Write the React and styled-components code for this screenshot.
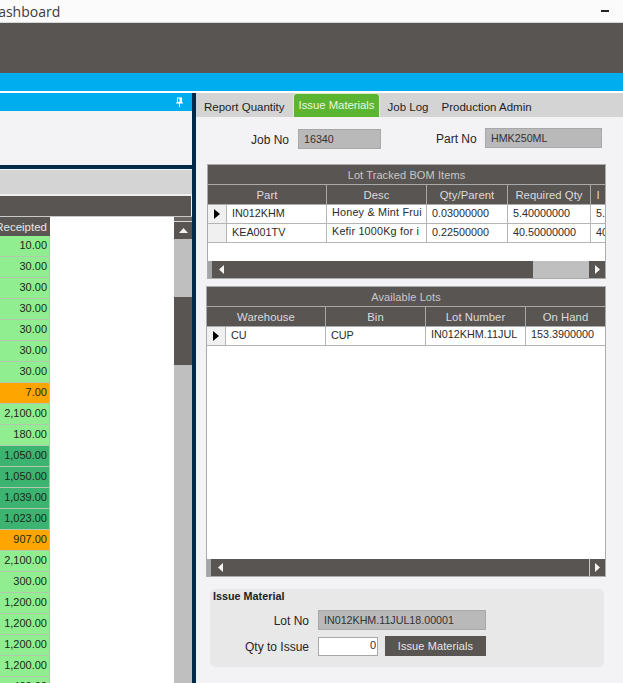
import React from "react";
import styled, { createGlobalStyle } from "styled-components";

const GlobalStyle = createGlobalStyle`
  html, body {
    margin: 0;
    padding: 0;
    background: #f3f3f5;
    overflow: hidden;
  }
  * { box-sizing: border-box; }
`;

const receipts = [
  ["10.00", "light"], ["30.00", "light"], ["30.00", "light"], ["30.00", "light"],
  ["30.00", "light"], ["30.00", "light"], ["30.00", "light"], ["7.00", "orange"],
  ["2,100.00", "light"], ["180.00", "light"], ["1,050.00", "dark"], ["1,050.00", "dark"],
  ["1,039.00", "dark"], ["1,023.00", "dark"], ["907.00", "orange"], ["2,100.00", "light"],
  ["300.00", "light"], ["1,200.00", "light"], ["1,200.00", "light"], ["1,200.00", "light"],
  ["1,200.00", "light"], ["400.00", "light"],
];

const bomColumns = "19px 100px 100px 81px 83px 1fr";
const lotColumns = "19px 100px 100px 100px 1fr";

function Arrow({ dir }) {
  const points = {
    up: "0,5 4.5,0 9,5",
    left: "5,0 0,4.5 5,9",
    right: "0,0 5,4.5 0,9",
  }[dir];
  const box = dir === "up" ? "0 0 9 5" : "0 0 5 9";
  return (
    <svg width={dir === "up" ? 9 : 5} height={dir === "up" ? 5 : 9} viewBox={box}>
      <polygon points={points} fill="#f4f4f4" />
    </svg>
  );
}

function RowMarker() {
  return (
    <svg width="6" height="10" viewBox="0 0 6 10">
      <polygon points="0,0 6,5 0,10" fill="#000" />
    </svg>
  );
}

function PinIcon() {
  return (
    <svg width="7" height="10" viewBox="0 0 7 10">
      <path d="M1 0.5h5v5h-5z M0 5.5h7v1h-7z M3 6.5h1v3.5h-1z" fill="#fff" />
      <rect x="2" y="1.5" width="1.5" height="3.5" fill="#00aeef" />
    </svg>
  );
}

function App() {
  return (
    <Page>
      <GlobalStyle />
      <TitleBar>
        <TitleText>Dashboard</TitleText>
        <MinimizeMark />
      </TitleBar>
      <Ribbon />
      <BlueStrip />
      <Workspace>
        <LeftPanel>
          <PanelHeader>
            <PinIcon />
          </PanelHeader>
          <PanelBody />
          <GroupBand />
          <GridCaption />
          <ReceiptArea>
            <ReceiptColumn>
              <ReceiptHead>Receipted</ReceiptHead>
              {receipts.map(([value, tone], index) => (
                <ReceiptCell key={index} $tone={tone}>{value}</ReceiptCell>
              ))}
            </ReceiptColumn>
            <EmptySpace />
            <VerticalScroll>
              <ScrollCap />
              <ScrollUp><Arrow dir="up" /></ScrollUp>
              <VerticalThumb />
            </VerticalScroll>
          </ReceiptArea>
        </LeftPanel>

        <RightPanel>
          <TabStrip>
            <Tab>Report Quantity</Tab>
            <ActiveTab>Issue Materials</ActiveTab>
            <Tab $gap={8}>Job Log</Tab>
            <Tab $gap={13}>Production Admin</Tab>
          </TabStrip>
          <JobRow>
            <FieldLabel $width={39}>Job No</FieldLabel>
            <ReadOnlyField $width={83}>16340</ReadOnlyField>
            <FieldLabel $width={41} $gap={55} $lift>Part No</FieldLabel>
            <ReadOnlyField $width={117} $lift>HMK250ML</ReadOnlyField>
          </JobRow>

          <BomGrid>
            <GridTitle>Lot Tracked BOM Items</GridTitle>
            <GridHeadRow $columns={bomColumns}>
              <HeadCell $span={2}>Part</HeadCell>
              <HeadCell>Desc</HeadCell>
              <HeadCell>Qty/Parent</HeadCell>
              <HeadCell>Required Qty</HeadCell>
              <HeadCell>I</HeadCell>
            </GridHeadRow>
            <DataRow $columns={bomColumns}>
              <MarkerCell><RowMarker /></MarkerCell>
              <DataCell>IN012KHM</DataCell>
              <DataCell $lift $wide>Honey &amp; Mint Frui</DataCell>
              <DataCell>0.03000000</DataCell>
              <DataCell>5.40000000</DataCell>
              <DataCell $last>5.4</DataCell>
            </DataRow>
            <DataRow $columns={bomColumns}>
              <MarkerCell />
              <DataCell>KEA001TV</DataCell>
              <DataCell $lift $wide>Kefir 1000Kg for i</DataCell>
              <DataCell>0.22500000</DataCell>
              <DataCell>40.50000000</DataCell>
              <DataCell $last>40</DataCell>
            </DataRow>
            <GridFill />
            <HorizontalScroll>
              <ScrollSliver />
              <ScrollButton><Arrow dir="left" /></ScrollButton>
              <HorizontalThumb $width={304} />
              <ScrollTrack />
              <ScrollButton><Arrow dir="right" /></ScrollButton>
            </HorizontalScroll>
          </BomGrid>

          <LotGrid>
            <GridTitle>Available Lots</GridTitle>
            <GridHeadRow $columns={lotColumns}>
              <HeadCell $span={2}>Warehouse</HeadCell>
              <HeadCell>Bin</HeadCell>
              <HeadCell>Lot Number</HeadCell>
              <HeadCell>On Hand</HeadCell>
            </GridHeadRow>
            <DataRow $columns={lotColumns}>
              <MarkerCell><RowMarker /></MarkerCell>
              <DataCell>CU</DataCell>
              <DataCell>CUP</DataCell>
              <DataCell $lift>IN012KHM.11JUL</DataCell>
              <DataCell $lift $last>153.3900000</DataCell>
            </DataRow>
            <GridFill />
            <HorizontalScroll>
              <ScrollSliver />
              <ScrollButton><Arrow dir="left" /></ScrollButton>
              <HorizontalThumb $grow />
              <ScrollButton $divider><Arrow dir="right" /></ScrollButton>
            </HorizontalScroll>
          </LotGrid>

          <IssueBox>
            <IssueTitle>Issue Material</IssueTitle>
            <IssueRow>
              <IssueLabel>Lot No</IssueLabel>
              <ReadOnlyField $width={168}>IN012KHM.11JUL18.00001</ReadOnlyField>
            </IssueRow>
            <IssueRow $gap={6}>
              <IssueLabel>Qty to Issue</IssueLabel>
              <QtyInput>0</QtyInput>
              <IssueButton>Issue Materials</IssueButton>
            </IssueRow>
          </IssueBox>
        </RightPanel>
      </Workspace>
    </Page>
  );
}

export default App;

const Page = styled.div`
  width: 623px;
  height: 683px;
  display: flex;
  flex-direction: column;
  overflow: hidden;
  font-family: "Liberation Sans", Arial, sans-serif;
  font-size: 12px;
  color: #222;
`;

const TitleBar = styled.div`
  height: 23px;
  flex: none;
  display: flex;
  align-items: center;
  justify-content: space-between;
  background: #fbfbfb;
  border-bottom: 1px solid #d8d8d8;
  padding-right: 14px;
  overflow: hidden;
`;

const TitleText = styled.span`
  margin-left: -12px;
  font-family: "Open Sans", sans-serif;
  font-size: 14px;
  color: #3c3c3c;
`;

const MinimizeMark = styled.span`
  width: 8px;
  height: 2px;
  background: #222;
`;

const Ribbon = styled.div`
  height: 50px;
  flex: none;
  background: #595553;
`;

const BlueStrip = styled.div`
  height: 18px;
  flex: none;
  background: #00aeef;
`;

const Workspace = styled.div`
  flex: 1;
  min-height: 0;
  display: flex;
  padding-top: 2px;
  background: #fff;
`;

const LeftPanel = styled.div`
  width: 196px;
  flex: none;
  display: flex;
  flex-direction: column;
  border-right: 4px solid #012a4a;
  background: #f1f1f1;
  overflow: hidden;
`;

const PanelHeader = styled.div`
  height: 18px;
  flex: none;
  display: flex;
  align-items: center;
  justify-content: flex-end;
  padding-right: 9px;
  background: #00aeef;
`;

const PanelBody = styled.div`
  height: 54px;
  flex: none;
  background: #f3f3f5;
`;

const GroupBand = styled.div`
  height: 29px;
  flex: none;
  background: #d4d4d4;
  border-top: 4px solid #012a4a;
  box-shadow: inset 0 1px 0 #f3f3f5;
`;

const GridCaption = styled.div`
  height: 22px;
  flex: none;
  margin-right: 1px;
  background: #595553;
  border-top: 2px solid #eeeeee;
`;

const ReceiptArea = styled.div`
  flex: 1;
  min-height: 0;
  display: flex;
  border-top: 1px solid #c9c9c9;
  background: #fff;
`;

const ReceiptColumn = styled.div`
  width: 50px;
  flex: none;
  display: flex;
  flex-direction: column;
  border-right: 1px solid #a8c8a0;
`;

const ReceiptHead = styled.div`
  height: 19px;
  flex: none;
  display: flex;
  align-items: center;
  justify-content: flex-end;
  padding-right: 3px;
  margin-right: -1px;
  background: #595553;
  color: #e6e6e6;
  font-size: 11.5px;
  white-space: nowrap;
  overflow: hidden;
`;

const toneColors = { light: "#90ee90", dark: "#3cb371", orange: "#ffa500" };

const ReceiptCell = styled.div`
  height: 21px;
  flex: none;
  display: flex;
  align-items: center;
  justify-content: flex-end;
  padding: 0 2px 2px 0;
  font-size: 11px;
  white-space: nowrap;
  color: #1a2a1a;
  background: ${({ $tone }) => toneColors[$tone]};
  border-bottom: 1px solid #b4c8b0;
`;

const EmptySpace = styled.div`
  flex: 1;
  background: #fff;
`;

const VerticalScroll = styled.div`
  width: 18px;
  flex: none;
  display: flex;
  flex-direction: column;
  background: #bfbfbf;
`;

const ScrollCap = styled.div`
  height: 5px;
  flex: none;
  background: #6a6664;
  border-bottom: 1px solid #d8d8d8;
`;

const ScrollUp = styled.div`
  height: 17px;
  flex: none;
  display: flex;
  align-items: center;
  justify-content: center;
  background: #595553;
`;

const VerticalThumb = styled.div`
  height: 68px;
  flex: none;
  margin-top: 58px;
  background: #595553;
`;

const RightPanel = styled.div`
  flex: 1;
  min-width: 0;
  display: flex;
  flex-direction: column;
  background: #f3f3f5;
`;

const TabStrip = styled.div`
  height: 24px;
  flex: none;
  display: flex;
  align-items: flex-end;
  padding-left: 8px;
  background: #d4d4d4;
`;

const Tab = styled.div`
  height: 21px;
  line-height: 23px;
  margin-left: ${({ $gap }) => $gap || 0}px;
  font-size: 11.5px;
  color: #1f1f1f;
  white-space: nowrap;
`;

const ActiveTab = styled.div`
  height: 24px;
  width: 87px;
  margin-left: 8px;
  padding-left: 5px;
  line-height: 22px;
  font-size: 11.3px;
  color: #eaf6e0;
  white-space: nowrap;
  background: #5cb531;
  border: 1px solid #d8efc8;
  border-bottom: 0;
  border-radius: 4px 4px 0 0;
`;

const JobRow = styled.div`
  height: 47px;
  flex: none;
  display: flex;
  align-items: flex-start;
  padding: 12px 0 0 55px;
`;

const FieldLabel = styled.div`
  width: ${({ $width }) => $width}px;
  flex: none;
  margin-left: ${({ $gap }) => $gap || 0}px;
  margin-right: 8px;
  margin-top: ${({ $lift }) => ($lift ? -1 : 0)}px;
  line-height: 22px;
  white-space: nowrap;
  color: #2a2226;
`;

const ReadOnlyField = styled.div`
  width: ${({ $width }) => $width}px;
  height: 20px;
  flex: none;
  margin-top: ${({ $lift }) => ($lift ? -1 : 0)}px;
  padding-left: 5px;
  line-height: 18px;
  font-size: 10.7px;
  color: #333;
  background: #b9b9b9;
  border: 1px solid #a8a8a8;
  white-space: nowrap;
  overflow: hidden;
`;

const GridFrame = styled.div`
  flex: none;
  display: flex;
  flex-direction: column;
  background: #fff;
  border: 1px solid #ababab;
  overflow: hidden;
`;

const BomGrid = styled(GridFrame)`
  height: 115px;
  width: 399px;
  margin-left: 11px;
`;

const LotGrid = styled(GridFrame)`
  height: 291px;
  width: 400px;
  margin: 7px 0 0 10px;
`;

const GridTitle = styled.div`
  height: 20px;
  flex: none;
  text-align: center;
  line-height: 20px;
  font-size: 11px;
  letter-spacing: 0.1px;
  color: #c9c7c6;
  background: #595553;
  border-bottom: 1px solid #a9a9a9;
`;

const GridHeadRow = styled.div`
  height: 20px;
  flex: none;
  display: grid;
  grid-template-columns: ${({ $columns }) => $columns};
  background: #595553;
  border-bottom: 1px solid #ababab;
`;

const HeadCell = styled.div`
  grid-column: span ${({ $span }) => $span || 1};
  text-align: center;
  line-height: 20px;
  font-size: 11.3px;
  letter-spacing: 0.05px;
  color: #dcdad9;
  border-right: 1px solid #a9a9a9;
  white-space: nowrap;
  overflow: hidden;
  &:last-child { border-right: 0; }
`;

const DataRow = styled.div`
  height: 19px;
  flex: none;
  display: grid;
  grid-template-columns: ${({ $columns }) => $columns};
  border-bottom: 1px solid #b5b5b5;
`;

const MarkerCell = styled.div`
  display: flex;
  align-items: center;
  justify-content: center;
  background: #f0f0f0;
  border-right: 1px solid #b5b5b5;
`;

const DataCell = styled.div`
  padding-left: 5px;
  line-height: ${({ $lift }) => ($lift ? 15 : 17)}px;
  font-size: 10.8px;
  letter-spacing: ${({ $wide }) => ($wide ? 0.2 : 0)}px;
  color: #2b2b2b;
  white-space: nowrap;
  overflow: hidden;
  border-right: ${({ $last }) => ($last ? "0" : "1px solid #b5b5b5")};
`;

const GridFill = styled.div`
  flex: 1;
  background: #fff;
`;

const HorizontalScroll = styled.div`
  height: 17px;
  flex: none;
  display: flex;
  background: #bfbfbf;
`;

const ScrollSliver = styled.div`
  width: 5px;
  flex: none;
  background: #a5a5a5;
  border-right: 1px solid #595553;
`;

const ScrollButton = styled.div`
  width: 16px;
  flex: none;
  display: flex;
  align-items: center;
  justify-content: center;
  background: #595553;
  border-left: ${({ $divider }) => ($divider ? "1px solid #c8c8c8" : "0")};
`;

const HorizontalThumb = styled.div`
  width: ${({ $width }) => ($width ? `${$width}px` : "auto")};
  flex: ${({ $grow }) => ($grow ? 1 : "none")};
  background: #595553;
`;

const ScrollTrack = styled.div`
  flex: 1;
  background: #bfbfbf;
`;

const IssueBox = styled.div`
  width: 394px;
  height: 78px;
  flex: none;
  margin: 12px 0 0 14px;
  padding: 0 3px;
  background: #e8e8e8;
  border-radius: 5px;
`;

const IssueTitle = styled.div`
  height: 21px;
  line-height: 14px;
  font-size: 10.8px;
  font-weight: 700;
  color: #222;
`;

const IssueRow = styled.div`
  display: flex;
  align-items: center;
  margin-top: ${({ $gap }) => $gap || 0}px;
`;

const IssueLabel = styled.div`
  width: 96px;
  margin-right: 9px;
  padding-top: 2px;
  text-align: right;
  white-space: nowrap;
  color: #2a2226;
`;

const QtyInput = styled.div`
  width: 60px;
  height: 19px;
  padding-right: 1px;
  text-align: right;
  line-height: 15px;
  font-size: 11px;
  color: #333;
  background: #fff;
  border: 1px solid #a8a8a8;
`;

const IssueButton = styled.button`
  width: 101px;
  height: 20px;
  margin-left: 7px;
  padding: 0;
  border: 0;
  background: #595553;
  color: #e6e6e6;
  font-family: "Liberation Sans", Arial, sans-serif;
  font-size: 11px;
  letter-spacing: 0.1px;
`;
